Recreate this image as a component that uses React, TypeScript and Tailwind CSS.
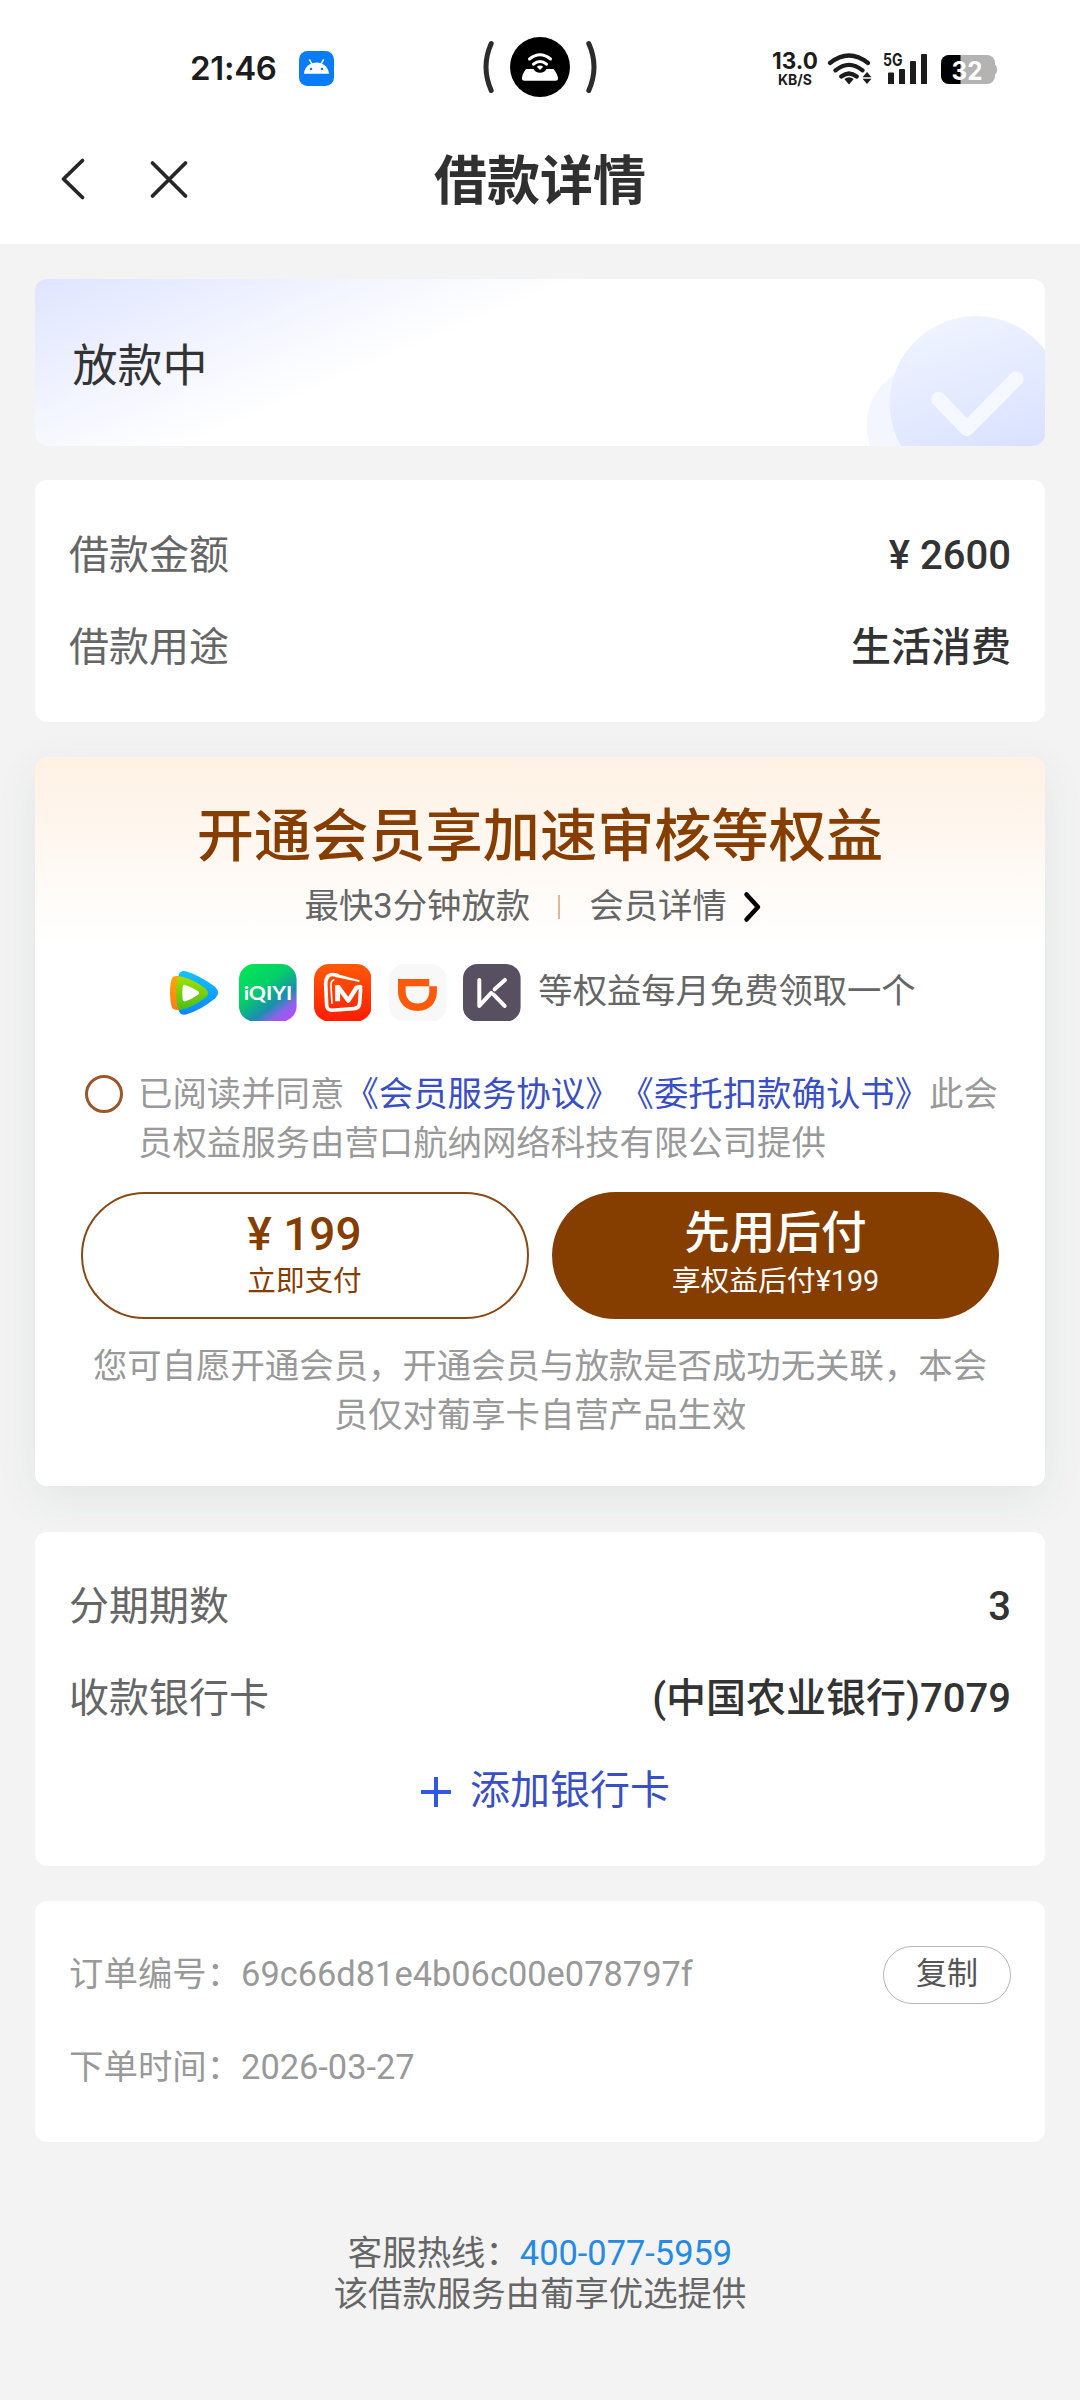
import type { ReactNode } from 'react';

const FONT = "font-[Roboto,'Noto_Sans_CJK_SC',sans-serif]";

function StatusBar() {
  return (
    <div className="flex h-[134px] items-start font-[Inter,sans-serif] text-[#1c1c1c]">
      <div className="ml-[190px] flex h-full w-[296px] items-center pt-[2px]">
        <span className="w-[109px] text-[33px] font-semibold leading-[40px] tracking-[-0.3px]">21:46</span>
        <svg className="h-[35px] w-[35px]" viewBox="0 0 35 35">
          <rect width="35" height="35" rx="8.5" fill="#0a7cf5" />
          <path d="M5 22.7c.5-4.800 3.200-8.300 7-9.900l-2.300-4 1.300-.7 2.300 4.100a14 14 0 0 1 8.400 0l2.300-4.100 1.300.7-2.300 4c3.800 1.600 6.500 5.100 7 9.900z" fill="#fff" />
          <circle cx="12" cy="18" r="1.300" fill="#0a7cf5" />
          <circle cx="23" cy="18" r="1.300" fill="#0a7cf5" />
        </svg>
      </div>
      <svg className="mt-[36px] -ml-[4px] h-[62px] w-[116px] shrink-0" viewBox="482 36 116 62" fill="none">
        <path d="M491.200 43.500Q480.800 67 491.200 90.500M588.800 43.500Q599.200 67 588.800 90.500" stroke="#2b2b2b" strokeWidth="5" strokeLinecap="round" />
        <circle cx="540" cy="67" r="30" fill="#000" />
        <path d="M526 69h7.500c1 2.200 3.500 3.700 6.500 3.700s5.500-1.500 6.500-3.700h7c3 4 4.500 7 4.500 9.500 0 1.500-1 2.200-2.500 2.200h-31c-1.500 0-2.500-.7-2.500-2.200 0-2.500 1-5.500 4-9.500z" fill="#fff" />
        <path d="M529.500 59q10.500-8.500 21 0M533.500 64.200q6.500-5.500 13 0" stroke="#fff" strokeWidth="3" strokeLinecap="round" />
        <path d="M536.800 66.800q3.200-2.400 6.400 0l-3.200 3.200z" fill="#fff" />
      </svg>
      <div className="ml-[172px] mt-[50px] flex h-[38px] items-start">
        <div className="flex w-[50px] flex-col items-center gap-px">
          <span className="text-[22.500px] font-bold leading-[22px]">13.0</span>
          <span className="text-[14px] font-bold leading-[14px]">KB/S</span>
        </div>
        <svg className="ml-[5px] mt-px h-[36px] w-[48px]" viewBox="826 51 48 36" fill="none">
          <path d="M831 63q19-15 38 0M836.500 70.300q13.500-11 27 0M842.300 76.500q7.700-6 15.400 0" stroke="#1c1c1c" strokeWidth="4.200" strokeLinecap="round" />
          <path d="M845.300 79q4.700-3.500 9.400 0l-4.700 5.500z" fill="#1c1c1c" />
          <path d="M868 72l4.500 5.300h-9zM868 84l4.500-5.300h-9z" fill="#1c1c1c" />
        </svg>
        <svg className="ml-[8px] mt-px h-[36px] w-[48px]" viewBox="882 51 48 36">
          <text x="884" y="66" fontSize="17" fontWeight="700" fill="#1c1c1c" textLength="19.500" lengthAdjust="spacingAndGlyphs">5G</text>
          <path d="M889 73.500a1 1 0 0 1 1-1h4a1 1 0 0 1 1 1V84h-6zM900 70a1 1 0 0 1 1-1h4a1 1 0 0 1 1 1v14h-6zM911 62a1 1 0 0 1 1-1h4a1 1 0 0 1 1 1v22h-6zM922 55a1 1 0 0 1 1-1h4a1 1 0 0 1 1 1v29h-6z" fill="#1c1c1c" />
        </svg>
        <svg className="ml-[10px] mt-px h-[36px] w-[60px]" viewBox="940 51 60 36">
          <defs>
            <clipPath id="battery">
              <rect x="942" y="55" width="54" height="29" rx="8" />
            </clipPath>
          </defs>
          <path d="M995 64q3 1 3 5.500t-3 5.500z" fill="#b3b3b3" />
          <g clipPath="url(#battery)">
            <rect x="942" y="55" width="54" height="29" fill="#b3b3b3" />
            <rect x="942" y="55" width="19.500" height="29" fill="#000" />
          </g>
          <text x="952.500" y="79.500" fontSize="26" fontWeight="700" fill="#fff" textLength="31" lengthAdjust="spacingAndGlyphs">32</text>
        </svg>
      </div>
    </div>
  );
}

function NavBar() {
  return (
    <div className="grid h-[110px] grid-cols-[1fr_auto_1fr] items-start">
      <svg className="ml-[56px] mt-[22px] h-[48px] w-[140px]" viewBox="56 156 140 48" fill="none" stroke="#262626" strokeWidth="3.800" strokeLinecap="round" strokeLinejoin="round">
        <path d="M82.500 160.500L63.500 179l19 18.500" />
        <path d="M152.500 163l33 33M185.500 163l-33 33" />
      </svg>
      <h1 className="mt-[16px] text-[53px] font-bold leading-[64px] text-[#303030]">借款详情</h1>
    </div>
  );
}

function Card({ children, className = '' }: { children: ReactNode; className?: string }) {
  return <section className={`rounded-[12px] bg-white px-[34.560px] ${className}`}>{children}</section>;
}

function Row({ label, value, className = '' }: { label: string; value: string; className?: string }) {
  return (
    <div className={`flex h-[92.160px] items-center justify-between text-[40px] leading-[56px] ${className}`}>
      <span className="text-[#666]">{label}</span>
      <span className="font-medium text-[#333]">{value}</span>
    </div>
  );
}

function StatusCard() {
  return (
    <section className="relative mt-[34.560px] flex h-[167px] items-center overflow-hidden rounded-[12px] bg-white bg-[linear-gradient(157deg,#dfe5ff_0%,#eaeeff_14%,#f7f8ff_28%,#fff_39%)] pl-[38px]">
      <span className="mt-[9px] text-[45px] leading-[60px] text-[#333]">放款中</span>
      <svg className="absolute right-0 top-0 h-[167px] w-[181px]" viewBox="73.300 25.700 543 501" fill="none">
        <defs>
          <linearGradient id="disc" x1="0.300" y1="0" x2="0.600" y2="0.800">
            <stop offset="0" stopColor="#f0f4ff" />
            <stop offset="1" stopColor="#dae2ff" />
          </linearGradient>
        </defs>
        <circle cx="262" cy="465" r="181" fill="#f4f6ff" />
        <circle cx="410" cy="397" r="260" fill="url(#disc)" />
        <path d="M297 386l85 89 148-150" stroke="#f6f8ff" strokeWidth="44" strokeLinecap="round" strokeLinejoin="round" />
      </svg>
    </section>
  );
}

function TencentVideo() {
  return (
    <svg className="h-[57.600px] w-[57.600px]" viewBox="42 72 173 173">
      <defs>
        <linearGradient id="tvBlue" x1="0" y1="0" x2="0" y2="1">
          <stop offset="0" stopColor="#12c3ff" />
          <stop offset="1" stopColor="#0a86ff" />
        </linearGradient>
        <linearGradient id="tvOrange" x1="0" y1="0" x2="0" y2="1">
          <stop offset="0" stopColor="#ffa800" />
          <stop offset="1" stopColor="#ff7a1a" />
        </linearGradient>
        <linearGradient id="tvGreen" x1="0" y1="0" x2="0" y2="1">
          <stop offset="0" stopColor="#a3e000" />
          <stop offset="1" stopColor="#4bbd1c" />
        </linearGradient>
      </defs>
      <path d="M86 104q6-14 22-10 42 13 88 47 17 17 0 34-44 36-88 49-16 4-22-12z" fill="url(#tvBlue)" />
      <path d="M60 160q0-26 5-42 3-10 14-10h10v102H79q-11 0-14-10-5-16-5-40z" fill="url(#tvOrange)" />
      <path d="M82 120q2-13 14-10 36 8 72 36 13 13 0 26-36 28-72 37-12 3-14-10-6-40 0-79z" fill="url(#tvGreen)" />
      <path d="M98 140q1-7 8-5 20 7 38 19 7 5 0 10-18 13-38 20-7 2-8-5-2-20 0-39z" fill="#fff" />
    </svg>
  );
}

function Iqiyi() {
  return (
    <svg className="h-[57.600px] w-[57.600px]" viewBox="0 0 173 173">
      <defs>
        <linearGradient id="iqBg" x1="0.200" y1="0" x2="0.950" y2="1">
          <stop offset="0" stopColor="#00e35a" />
          <stop offset="0.350" stopColor="#04cf68" />
          <stop offset="0.640" stopColor="#1a8fae" />
          <stop offset="0.790" stopColor="#8a64e8" />
          <stop offset="1" stopColor="#c544ff" />
        </linearGradient>
      </defs>
      <rect width="173" height="173" rx="46" fill="url(#iqBg)" />
      <text x="14" y="109" fontFamily="Lato" fontWeight="700" fontSize="58" fill="#fff" textLength="146" lengthAdjust="spacingAndGlyphs">iQIYI</text>
    </svg>
  );
}

function MangoTv() {
  return (
    <svg className="h-[57.600px] w-[57.600px]" viewBox="491 72 173 173" fill="none">
      <defs>
        <linearGradient id="mgBg" x1="0" y1="0" x2="0" y2="1">
          <stop offset="0" stopColor="#ff5a05" />
          <stop offset="1" stopColor="#ff1c05" />
        </linearGradient>
      </defs>
      <rect x="491" y="72" width="173" height="173" rx="46" fill="url(#mgBg)" />
      <path d="M560 106q-18-6-26 2-7 6-8 22l3 66q1 15 16 15l66-5q15-1 17-15l3-42" stroke="#fff" strokeWidth="11" strokeLinecap="round" strokeLinejoin="round" />
      <path d="M552 100l76 21-1 5-72-15z" fill="#fff" />
      <path d="M545 190l-3-52q-1-14 8-18" stroke="#fff" strokeWidth="5" strokeLinecap="round" />
      <path d="M562 136v48" stroke="#fff" strokeWidth="15" strokeLinecap="butt" />
      <path d="M564 141l30 41 24-38 12-3" stroke="#fff" strokeWidth="13" strokeLinejoin="round" strokeLinecap="round" />
    </svg>
  );
}

function Didi() {
  return (
    <svg className="h-[57.600px] w-[57.600px]" viewBox="717 72 173 173" fill="none">
      <rect x="717" y="72" width="173" height="173" rx="46" fill="#f8f8f8" />
      <path d="M744 117h94v22h-71v15c0 22 14 37 36 37s35-15 35-37v-15h23v15c0 35-22 59-58 59s-59-24-59-59z" fill="#fb5a0b" />
    </svg>
  );
}

function Keep() {
  return (
    <svg className="h-[57.600px] w-[57.600px]" viewBox="939 72 173 173" fill="none">
      <rect x="939" y="72" width="173" height="173" rx="44" fill="#584f60" />
      <path d="M988 120v78l36-39M1034 148l31-28M1031 164l33 34" stroke="#fff" strokeWidth="12" strokeLinecap="round" strokeLinejoin="round" />
    </svg>
  );
}

function MembershipCard() {
  return (
    <section className="mt-[34.560px] h-[729.400px] rounded-[12px] bg-white bg-[linear-gradient(180deg,#fff1e4_0px,#fff5ec_60px,#fff_188px)] shadow-[0_12px_44px_rgba(40,70,70,0.075)]">
      <h2 className="pt-[46px] text-center text-[57.200px] font-medium leading-[68px] text-[#863d00]">开通会员享加速审核等权益</h2>
      <div className="mt-[9px] flex h-[52px] items-center pl-[270px] text-[34.400px] leading-[52px] text-[#666]">
        <span>最快3分钟放款</span>
        <span className="ml-[28px] mt-[2px] h-[24px] w-[2px] bg-[#e0b79b]" />
        <span className="ml-[29px]">会员详情</span>
        <svg className="ml-[15px] mt-[2px] h-[32px] w-[22px]" viewBox="0 0 22 32" fill="none">
          <path d="M4.500 3.500L16 16 4.500 28.500" stroke="#000" strokeWidth="4.500" strokeLinecap="round" strokeLinejoin="round" />
        </svg>
      </div>
      <div className="mt-[32px] flex h-[58px] items-center gap-[17.280px] pl-[129.500px]">
        <TencentVideo />
        <Iqiyi />
        <MangoTv />
        <Didi />
        <Keep />
        <span className="-mt-[4px] text-[34.300px] leading-[52px] text-[#666]">等权益每月免费领取一个</span>
      </div>
      <div className="mt-[48px] flex pl-[50.500px] text-[34.400px] leading-[49px] text-[#999]">
        <span className="mt-[5px] h-[38px] w-[38px] shrink-0 rounded-full border-[3px] border-[#9b572b]" />
        <p className="ml-[15px] whitespace-nowrap [text-spacing-trim:space-all]">
          已阅读并同意<span className="text-[#3a4fc4]">《会员服务协议》《委托扣款确认书》</span>此会
          <br />
          员权益服务由营口航纳网络科技有限公司提供
        </p>
      </div>
      <div className="mt-[24px] grid h-[127px] grid-cols-2 gap-[23px] px-[46px] text-center">
        <button className="flex flex-col items-center rounded-full border-2 border-[#8a4a18] pt-[9px] text-[#863d00]">
          <span className="text-[46px] font-medium leading-[62px]">¥ 199</span>
          <span className="-mt-px text-[28.600px] leading-[34px]">立即支付</span>
        </button>
        <button className="flex flex-col items-center rounded-full bg-[#863d00] pt-[11px] text-white">
          <span className="text-[45.600px] font-medium leading-[62px]">先用后付</span>
          <span className="-mt-px text-[28.800px] leading-[34px]">享权益后付¥199</span>
        </button>
      </div>
      <p className="mt-[23px] text-center text-[34.400px] leading-[49px] text-[#999]">
        您可自愿开通会员，开通会员与放款是否成功无关联，本会
        <br />
        员仅对葡享卡自营产品生效
      </p>
    </section>
  );
}

export default function App() {
  return (
    <div className={`flex h-[2400px] w-[1080px] flex-col overflow-hidden bg-[#f3f3f3] ${FONT}`}>
      <header className="h-[244px] shrink-0 bg-white">
        <StatusBar />
        <NavBar />
      </header>
      <main className="px-[34.560px]">
        <StatusCard />
        <Card className="mt-[34.560px] pb-[27.800px] pt-[29.800px]">
          <Row label="借款金额" value="¥ 2600" />
          <Row label="借款用途" value="生活消费" />
        </Card>
        <MembershipCard />
        <Card className="relative mt-[46px] py-[28.800px]">
          <Row label="分期期数" value="3" />
          <Row label="收款银行卡" value="(中国农业银行)7079" />
          <div className="flex h-[92.160px] items-center justify-center pl-[10px] text-[40px] leading-[56px] text-[#3a4fc4]">
            <svg className="mr-[18px] mt-[2px] h-[32px] w-[32px]" viewBox="0 0 32 32">
              <path d="M16 1v30M1 16h30" stroke="#3157e6" strokeWidth="4" />
            </svg>
            <span>添加银行卡</span>
          </div>
        </Card>
        <Card className="mt-[34.560px] py-[28.800px] text-[34.400px] text-[#999]">
          <div className="flex h-[92.160px] items-center justify-between leading-[50px]">
            <span className="-mt-[2px]">订单编号：69c66d81e4b06c00e078797f</span>
            <button className="flex h-[58px] w-[128px] items-center justify-center rounded-full border border-[#b5b5b5] pb-[2px] text-[31px] leading-[40px] text-[#555]">
              复制
            </button>
          </div>
          <div className="flex h-[92.160px] items-center leading-[50px]">
            <span className="-mt-[2px]">下单时间：2026-03-27</span>
          </div>
        </Card>
      </main>
      <footer className="mt-[91px] text-center text-[34.400px] leading-[40.500px] text-[#666]">
        <p>
          客服热线：<span className="text-[#2589e6]">400-077-5959</span>
        </p>
        <p>该借款服务由葡享优选提供</p>
      </footer>
    </div>
  );
}
